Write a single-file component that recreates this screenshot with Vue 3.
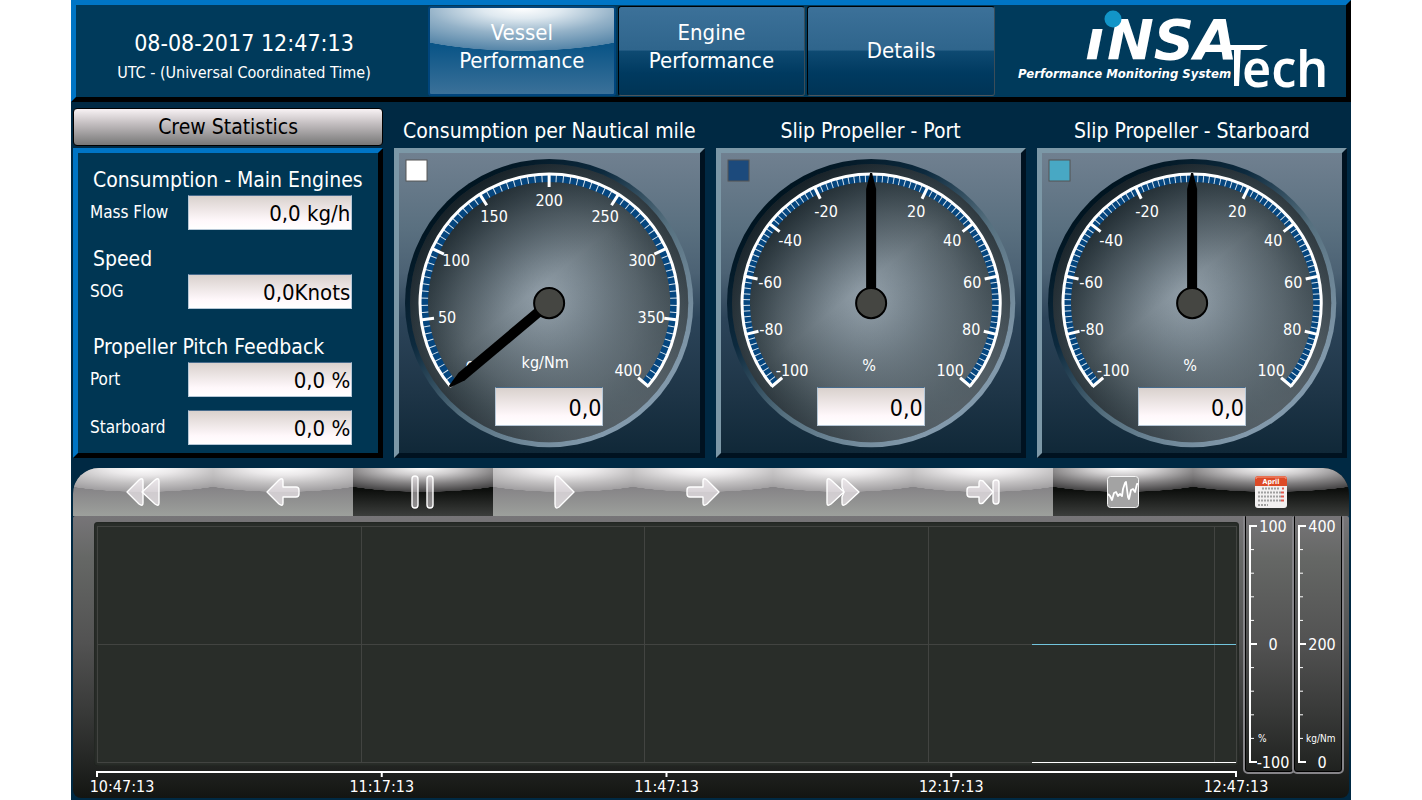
<script setup>
const tabs = [
  { lines: ['Vessel', 'Performance'], active: true },
  { lines: ['Engine', 'Performance'], active: false },
  { lines: ['Details'], active: false },
]

const groups = [
  { title: 'Consumption - Main Engines', rows: [{ id: 'mass', label: 'Mass Flow', value: '0,0 kg/h' }] },
  { title: 'Speed', rows: [{ id: 'sog', label: 'SOG', value: '0,0Knots' }] },
  {
    title: 'Propeller Pitch Feedback',
    rows: [
      { id: 'port', label: 'Port', value: '0,0 %' },
      { id: 'starboard', label: 'Starboard', value: '0,0 %' },
    ],
  },
]

const slipLabels = [
  ['-100', 71, 217], ['-80', 50, 176], ['-60', 49, 129], ['-40', 69, 87], ['-20', 105, 58],
  ['20', 195, 58], ['40', 231, 87], ['60', 251, 129], ['80', 250, 176], ['100', 229, 217],
]

const gauges = [
  {
    id: 'nm', title: 'Consumption per Nautical mile', color: '#ffffff', unit: 'kg/Nm', unitX: 146, unitY: 209,
    divisions: 8, needle: -130, value: '0,0',
    labels: [
      ['0', 71, 214], ['50', 48, 164], ['100', 57, 107], ['150', 95, 63], ['200', 150, 47],
      ['250', 206, 63], ['300', 243, 107], ['350', 252, 164], ['400', 229, 217],
    ],
  },
  {
    id: 'slip-port', title: 'Slip Propeller - Port', color: '#1c4a7c', unit: '%', unitX: 148, unitY: 212,
    divisions: 10, needle: 0, value: '0,0', labels: slipLabels,
  },
  {
    id: 'slip-star', title: 'Slip Propeller - Starboard', color: '#48a8c4', unit: '%', unitX: 148, unitY: 212,
    divisions: 10, needle: 0, value: '0,0', labels: slipLabels,
  },
]

const point = (deg, r) => {
  const a = (deg * Math.PI) / 180
  return [150 + r * Math.sin(a), 150 - r * Math.cos(a)]
}
const arc = (r) => {
  const [x1, y1] = point(-130, r)
  const [x2, y2] = point(130, r)
  return `M${x1} ${y1}A${r} ${r} 0 1 1 ${x2} ${y2}`
}
const ticks = (count, inner, outer) => {
  let d = ''
  for (let i = 0; i <= count; i++) {
    const deg = -130 + (260 * i) / count
    const [x1, y1] = point(deg, inner)
    const [x2, y2] = point(deg, outer)
    d += `M${x1} ${y1}L${x2} ${y2}`
  }
  return d
}

const controls = [
  { name: 'Fast rewind', shapes: ['M1 17L13 5Q17 2 17 6V28Q17 32 13 29Z', 'M16 17L29 5Q33 2 33 6V28Q33 32 29 29Z'] },
  { name: 'Step back', shapes: ['M1 17L13 5Q17 2 17 6V12H30Q33 12 33 15V19Q33 22 30 22H17V28Q17 32 13 29Z'] },
  { name: 'Pause', dark: true, shapes: ['M6 4Q6 1 9 1T12 4V30Q12 33 9 33T6 30Z', 'M21 4Q21 1 24 1T27 4V30Q27 33 24 33T21 30Z'] },
  { name: 'Play', shapes: ['M9 5Q9 -1 13 2L28 17L13 32Q9 35 9 29Z'] },
  { name: 'Step forward', shapes: ['M33 17L21 5Q17 2 17 6V12H4Q1 12 1 15V19Q1 22 4 22H17V28Q17 32 21 29Z'] },
  { name: 'Fast forward', shapes: ['M1 6Q1 2 5 5L18 17L5 29Q1 32 1 28Z', 'M16 6Q16 2 20 5L33 17L20 29Q16 32 16 28V22L18 17L16 12Z'] },
  { name: 'Skip to end', shapes: ['M27 17L17 6Q13 4 13 8V12H4Q1 12 1 15V19Q1 22 4 22H13V26Q13 30 17 28Z', 'M27 8Q27 5 30 5T33 8V26Q33 29 30 29T27 26Z'] },
]

const times = [
  { x: '0%', label: '10:47:13' },
  { x: '25%', label: '11:17:13' },
  { x: '50%', label: '11:47:13' },
  { x: '75%', label: '12:17:13' },
  { x: '100%', label: '12:47:13' },
]
const gridX = ['23.2%', '48.1%', '73%', '98.1%']

const scales = [
  { unit: '%', unitX: 12, labels: ['100', '0', '-100'], cx: 27 },
  { unit: 'kg/Nm', unitX: 11, labels: ['400', '200', '0'], cx: 27 },
]
const tickY = Array.from({ length: 11 }, (_, i) => 10 + i * 23.6)
</script>

<template>
  <main class="screen">
    <header class="top">
      <div class="clock">
        <div class="date">08-08-2017 12:47:13</div>
        <div class="utc">UTC - (Universal Coordinated Time)</div>
      </div>
      <nav class="tabs">
        <button v-for="t in tabs" :key="t.lines.join()" type="button" class="tab" :class="{ active: t.active }">
          <span v-for="l in t.lines" :key="l">{{ l }}</span>
        </button>
      </nav>
      <svg class="logo" viewBox="0 0 350 92" role="img" aria-label="iNSA Tech">
        <text y="54" class="logo-main"><tspan x="89">ı</tspan><tspan x="111">NSA</tspan></text>
        <circle cx="117" cy="14" r="8.5" fill="#1295c8" />
        <polygon points="212,40 272,40 263,45 208,45" fill="#fff" />
        <polygon points="238,40 245,40 243,81 238,81" fill="#fff" />
        <text x="246" y="82" class="logo-ech">ech</text>
        <text x="22" y="73" class="logo-sub">Performance Monitoring System</text>
      </svg>
    </header>

    <section class="dash">
      <div class="col">
        <button type="button" class="crew">Crew Statistics</button>
        <div class="stats">
          <div v-for="g in groups" :key="g.title" class="group">
            <h2>{{ g.title }}</h2>
            <div v-for="r in g.rows" :key="r.id" class="row">
              <label :for="r.id">{{ r.label }}</label>
              <input :id="r.id" class="field" type="text" readonly :value="r.value" />
            </div>
          </div>
        </div>
      </div>

      <div v-for="g in gauges" :key="g.id" class="col">
        <label class="gauge-title" :for="g.id">{{ g.title }}</label>
        <div class="gauge">
          <svg viewBox="0 0 300 300">
            <defs>
              <radialGradient :id="g.id + '-face'" cx="50%" cy="50%" r="50%">
                <stop offset="0" stop-color="#97a4ae" />
                <stop offset=".3" stop-color="#7c8992" />
                <stop offset=".65" stop-color="#5a666d" />
                <stop offset=".88" stop-color="#3c484e" />
                <stop offset="1" stop-color="#2f393f" />
              </radialGradient>
              <linearGradient :id="g.id + '-rim'" x1=".15" y1=".15" x2=".8" y2=".85">
                <stop offset="0" stop-color="#001420" />
                <stop offset=".3" stop-color="#0d2a3e" />
                <stop offset=".6" stop-color="#56707f" />
                <stop offset="1" stop-color="#8299ab" />
              </linearGradient>
              <linearGradient :id="g.id + '-shade'" x1=".15" y1=".1" x2=".8" y2=".9">
                <stop offset="0" stop-color="#000a10" stop-opacity=".6" />
                <stop offset=".45" stop-color="#20303a" stop-opacity="0" />
                <stop offset="1" stop-color="#8d99a2" stop-opacity=".4" />
              </linearGradient>
            </defs>
            <circle cx="150" cy="150" r="144" :fill="`url(#${g.id}-rim)`" />
            <circle cx="150" cy="150" r="139" :fill="`url(#${g.id}-face)`" />
            <circle cx="150" cy="150" r="139" :fill="`url(#${g.id}-shade)`" />
            <path :d="arc(125)" fill="none" stroke="#05467f" stroke-width="8" />
            <path :d="ticks(g.divisions * 10, 121, 129)" stroke="#d5e2ec" stroke-width="1" />
            <path :d="arc(129)" fill="none" stroke="#fff" stroke-width="3" />
            <path :d="ticks(g.divisions, 116, 130)" stroke="#fff" stroke-width="3" />
            <rect x="7" y="7" width="21" height="21" :fill="g.color" stroke="#555" />
            <text v-for="l in g.labels" :key="l[0]" :x="l[1]" :y="l[2] + 6" class="num">{{ l[0] }}</text>
            <text :x="g.unitX" :y="g.unitY + 6" class="num">{{ g.unit }}</text>
            <polygon
              points="145,150 145,36 149,20 151,20 155,36 155,150"
              fill="#000"
              :transform="`rotate(${g.needle} 150 150)`"
            />
            <circle cx="150" cy="150" r="15" fill="#454642" stroke="#000" stroke-width="2" />
          </svg>
          <input :id="g.id" class="field readout" type="text" readonly :value="g.value" />
        </div>
      </div>
    </section>

    <section class="trend">
      <div class="bar">
        <button v-for="c in controls" :key="c.name" type="button" :class="{ dark: c.dark }" :aria-label="c.name">
          <svg width="34" height="34" viewBox="0 0 34 34">
            <path
              v-for="d in c.shapes" :key="d" :d="d" fill="#f6f0f4" :fill-opacity="c.dark ? 0.5 : 0.65"
              stroke="#fff" stroke-width="1.4" stroke-linejoin="round"
            />
          </svg>
        </button>
        <button type="button" class="dark" aria-label="Trend">
          <svg width="34" height="34" viewBox="0 0 34 34">
            <rect x="1.5" y="1.5" width="31" height="31" rx="3" fill="#a3a3a3" stroke="#f4f4f4" />
            <path
              d="M2 19L4 21L6 25L8 18L10 17L12 21L14 19L16 21L17 14L19 8L20 7L22 22L23 24L25 15L27 14L29 17L31 9L32 9"
              fill="none" stroke="#fff" stroke-width="1.8" stroke-linejoin="round"
            />
          </svg>
        </button>
        <button type="button" class="dark" aria-label="Calendar">
          <svg width="34" height="34" viewBox="0 0 34 34">
            <rect x="1" y="1" width="32" height="32" rx="3" fill="#f2f0f0" />
            <path d="M1 11V4Q1 1 4 1H30Q33 1 33 4V11Z" fill="#dd4a27" />
            <path d="M2 4Q2 2 4 2H30Q32 2 32 4" fill="none" stroke="#f49a80" />
            <text x="17" y="9" class="april">April</text>
            <path
              d="M8 13.5H26M4 17.5H27M4 21.5H27M4 25.5H27M4 30H14"
              fill="none" stroke="#a0a0a0" stroke-width="2" stroke-dasharray="2 1"
            />
            <path d="M28 13.5H30M27 17.5H30M27 21.5H30M27 25.5H30" stroke="#e05a50" stroke-width="2" />
          </svg>
        </button>
      </div>

      <div class="chart">
        <div class="plot-col">
          <div class="plot">
            <svg class="lines" width="100%" height="100%" shape-rendering="crispEdges">
              <rect x="0" y="0" width="100%" height="100%" fill="none" stroke="#424441" />
              <line v-for="x in gridX" :key="x" :x1="x" :x2="x" y1="0" y2="100%" stroke="#424441" />
              <line x1="0" x2="100%" y1="50%" y2="50%" stroke="#424441" />
              <line x1="82.1%" x2="100%" y1="50%" y2="50%" stroke="#72c4dc" />
              <line x1="82.1%" x2="100%" y1="100%" y2="100%" stroke="#fff" />
            </svg>
          </div>
          <svg class="axis" width="100%" height="30">
            <rect x="0" y="5" width="100%" height="2" fill="#fff" />
            <template v-for="(t, i) in times" :key="t.label">
              <line :x1="t.x" :x2="t.x" y1="5" y2="11" stroke="#fff" stroke-width="2" />
              <text :x="t.x" y="26" :dx="i === 0 ? 25 : 0" class="num">{{ t.label }}</text>
            </template>
          </svg>
        </div>
        <div class="scales">
          <svg v-for="s in scales" :key="s.unit" class="scale" viewBox="0 0 46 255" width="46" height="255">
            <path d="M4 9V247" stroke="#fff" stroke-width="2" />
            <path
              v-for="(y, i) in tickY" :key="y" :d="`M3 ${y}H${i % 5 === 0 ? 11 : 8}`"
              stroke="#fff" :stroke-width="i % 5 === 0 ? 2 : 1"
            />
            <text v-for="(l, i) in s.labels" :key="l" :x="s.cx" :y="16 + i * 118" class="num">{{ l }}</text>
            <text :x="s.unitX" y="226" class="tiny">{{ s.unit }}</text>
          </svg>
        </div>
      </div>
    </section>
  </main>
</template>

<style>
body {
  background: #fff;
}
</style>

<style scoped>
.screen {
  max-width: 1280px;
  min-height: 100vh;
  margin: 0 auto;
  box-sizing: border-box;
  background: #002943;
  color: #fff;
  font-family: "DejaVu Sans Condensed", "DejaVu Sans", "Noto Sans", sans-serif;
  display: flex;
  flex-direction: column;
}
button {
  font: inherit;
  color: inherit;
  cursor: pointer;
}
.top {
  display: grid;
  grid-template-columns: 352fr 568fr 350fr;
  min-height: 92px;
  border: 5px solid;
  border-color: #0075c5 #000 #000 #0075c5;
  background: #003a5b;
}
.clock {
  padding: 12px 16px 0 0;
  display: flex;
  flex-direction: column;
  align-items: center;
  justify-content: center;
  gap: 4px;
}
.date {
  font-size: 23px;
  line-height: 28px;
}
.utc {
  font-size: 16px;
  line-height: 24px;
}
.tabs {
  display: grid;
  grid-template-columns: repeat(3, 1fr);
  gap: 2px;
  padding: 1px 1px 1px 0;
}
.tab {
  display: flex;
  flex-direction: column;
  align-items: center;
  justify-content: center;
  padding: 0 0 8px;
  font-size: 22px;
  line-height: 28px;
  border: 1px solid #000;
  border-right-color: #3b4d59;
  border-bottom-color: #4c555c;
  border-radius: 3px;
  background: linear-gradient(#3c7199 0, #2f658c 49%, #0e4a72 50%, #003a60 75%, #003455 100%);
}
.tab:last-child {
  padding: 0;
}
.tab.active {
  border: 2px solid #00457c;
  background:
    radial-gradient(ellipse 86% 43px at 50% 0, #fff 0, #dfe9f0 25%, #94b2c8 60%, #5585a8 99%, transparent 100%),
    linear-gradient(#0b5587 45%, #3b7199 100%);
}
.logo {
  width: 100%;
  height: 92px;
  display: block;
  overflow: visible;
}
.logo-main {
  font: italic bold 56px "DejaVu Sans", sans-serif;
  fill: #fff;
}
.logo-ech {
  font: 600 50px "Noto Sans", "Open Sans", sans-serif;
  fill: #fff;
}
.logo-sub {
  font: italic bold 13px "DejaVu Sans Condensed", "DejaVu Sans", sans-serif;
  fill: #fff;
}

.dash {
  display: grid;
  grid-template-columns: repeat(4, 1fr);
  gap: 11px;
  padding: 6px 4px 0 2px;
}
.col {
  display: flex;
  flex-direction: column;
}
.crew {
  height: 38px;
  margin: 0 0 2px;
  padding: 0;
  font-size: 21px;
  color: #000;
  border: 1px solid #000;
  border-radius: 4px;
  background: linear-gradient(#f8f2f4, #c4bfc1 40%, #777 100%);
}
.gauge-title {
  height: 40px;
  line-height: 47px;
  font-size: 21px;
  text-align: center;
  white-space: nowrap;
}
.stats {
  flex: 1;
  border: 5px solid;
  border-color: #0075c5 #000 #000 #0075c5;
  background: #003653;
  padding: 12px 26px 8px 12px;
  display: flex;
  flex-direction: column;
}
.group:nth-child(2) {
  margin-top: 14px;
}
.group:last-child {
  margin-top: auto;
}
h2 {
  margin: 0 -20px 0 3px;
  font-size: 21px;
  font-weight: normal;
  line-height: 30px;
  white-space: nowrap;
}
.row {
  display: grid;
  grid-template-columns: 98px 1fr;
  align-items: center;
}
.row + .row {
  margin-top: 13px;
}
.row label {
  font-size: 17px;
  line-height: 34px;
  height: 35px;
}
.field {
  box-sizing: border-box;
  width: 100%;
  min-width: 0;
  height: 35px;
  margin: 0;
  padding: 2px 1px 0;
  border: 1px solid #b6c7d6;
  border-top-color: #476b8c;
  background: linear-gradient(#d9d1cd, #fff8fb 75%, #fff);
  font: 22px "DejaVu Sans Condensed", "DejaVu Sans", sans-serif;
  color: #000;
  text-align: right;
}
.gauge {
  position: relative;
  border: 5px solid;
  border-color: #7c98a7 #001220 #001220 #7c98a7;
  background: linear-gradient(#708090 0, #5a7080 25%, #4c6274 40%, #2c4459 55%, #1e3547 80%, #102838 100%);
}
.gauge svg {
  display: block;
  width: 100%;
}
.readout {
  position: absolute;
  left: 32%;
  top: 78%;
  width: 36%;
  height: 13%;
  font-size: 23px;
}
.num {
  font-size: 16px;
  fill: #fff;
  text-anchor: middle;
}

.trend {
  margin: 10px 2px 2px;
  flex: 1;
  display: flex;
  flex-direction: column;
}
.bar {
  display: grid;
  grid-template-columns: repeat(8, 140fr) 156fr;
  height: 48px;
  border-radius: 26px 26px 0 0;
  overflow: hidden;
}
.bar button {
  border: 0;
  padding: 0;
  display: flex;
  align-items: center;
  justify-content: center;
  background:
    radial-gradient(ellipse 82% 24px at 50% 0, #fff 0, #ebe9ea 30%, #c2c0c1 65%, #a09ea0 99%, transparent 100%),
    linear-gradient(#858386 40%, #9da09c 100%);
}
.bar button.dark {
  background:
    radial-gradient(ellipse 82% 24px at 50% 0, #fff 0, #cfcdce 30%, #838182 65%, #444344 99%, transparent 100%),
    linear-gradient(#0c0e0c 45%, #3c3e3c 100%);
}
.april {
  font: bold 7px "DejaVu Sans Condensed", sans-serif;
  fill: #fff;
  text-anchor: middle;
}
.chart {
  flex: 1;
  display: flex;
  align-items: flex-start;
  padding: 6px 7px 0 21px;
  border-radius: 2px 2px 8px 8px;
  background: linear-gradient(#777578 0, #656765 15%, #525252 45%, #3a3b3a 68%, #252725 86%, #131512 100%);
}
.plot-col {
  flex: 1;
  min-width: 0;
}
.plot {
  height: 236px;
  padding: 4px 3px;
  border-radius: 4px;
  background: #292d29;
  box-shadow: inset 0 0 2px #151815;
}
.lines,
.axis,
.scale {
  display: block;
  overflow: visible;
}
.axis {
  width: calc(100% - 6px);
  margin: 0 3px;
}
.scales {
  display: flex;
  margin: -6px 0 0 6px;
}
.scale {
  border: 1px solid #000;
  border-top: 0;
  border-radius: 0 0 3px 3px;
  outline: 2px solid #858488;
  outline-offset: 0;
  clip-path: inset(0 -3px -3px -3px);
  margin-right: 1px;
}
.scale + .scale {
  margin-right: 0;
}
.tiny {
  font-size: 10px;
  fill: #fff;
}
</style>
